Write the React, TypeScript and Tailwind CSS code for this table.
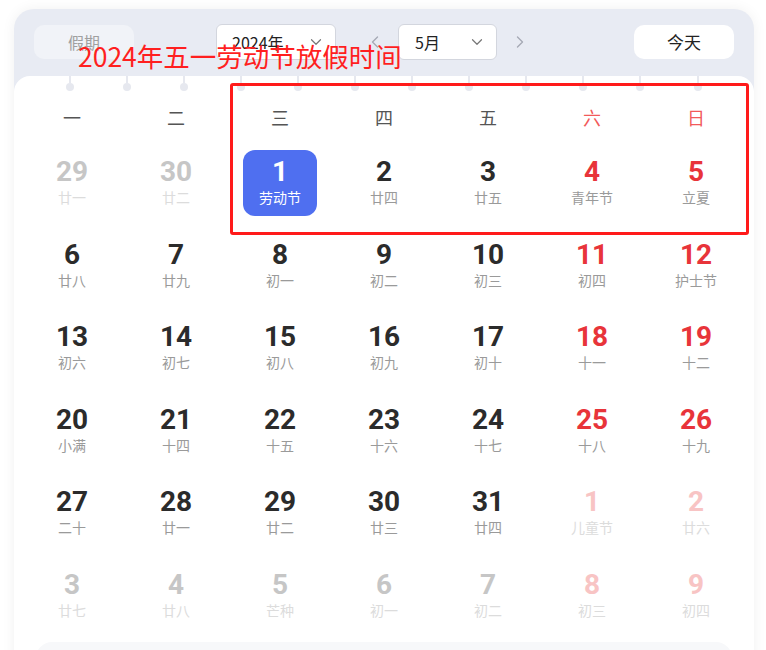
import React from 'react';
import { ChevronDown, ChevronLeft, ChevronRight } from 'lucide-react';

interface Day {
  n: number;
  lunar: string;
  out?: boolean;
  red?: boolean;
  selected?: boolean;
}

const WEEK = ['一', '二', '三', '四', '五', '六', '日'];

const ROWS: Day[][] = [
  [
    { n: 29, lunar: '廿一', out: true },
    { n: 30, lunar: '廿二', out: true },
    { n: 1, lunar: '劳动节', selected: true },
    { n: 2, lunar: '廿四' },
    { n: 3, lunar: '廿五' },
    { n: 4, lunar: '青年节', red: true },
    { n: 5, lunar: '立夏', red: true },
  ],
  [
    { n: 6, lunar: '廿八' },
    { n: 7, lunar: '廿九' },
    { n: 8, lunar: '初一' },
    { n: 9, lunar: '初二' },
    { n: 10, lunar: '初三' },
    { n: 11, lunar: '初四', red: true },
    { n: 12, lunar: '护士节', red: true },
  ],
  [
    { n: 13, lunar: '初六' },
    { n: 14, lunar: '初七' },
    { n: 15, lunar: '初八' },
    { n: 16, lunar: '初九' },
    { n: 17, lunar: '初十' },
    { n: 18, lunar: '十一', red: true },
    { n: 19, lunar: '十二', red: true },
  ],
  [
    { n: 20, lunar: '小满' },
    { n: 21, lunar: '十四' },
    { n: 22, lunar: '十五' },
    { n: 23, lunar: '十六' },
    { n: 24, lunar: '十七' },
    { n: 25, lunar: '十八', red: true },
    { n: 26, lunar: '十九', red: true },
  ],
  [
    { n: 27, lunar: '二十' },
    { n: 28, lunar: '廿一' },
    { n: 29, lunar: '廿二' },
    { n: 30, lunar: '廿三' },
    { n: 31, lunar: '廿四' },
    { n: 1, lunar: '儿童节', out: true, red: true },
    { n: 2, lunar: '廿六', out: true, red: true },
  ],
  [
    { n: 3, lunar: '廿七', out: true },
    { n: 4, lunar: '廿八', out: true },
    { n: 5, lunar: '芒种', out: true },
    { n: 6, lunar: '初一', out: true },
    { n: 7, lunar: '初二', out: true },
    { n: 8, lunar: '初三', out: true, red: true },
    { n: 9, lunar: '初四', out: true, red: true },
  ],
];

const numColor = (d: Day) => {
  if (d.selected) return 'text-white';
  if (d.out) return d.red ? 'text-[#f8c4c4]' : 'text-[#c6c6c6]';
  return d.red ? 'text-[#e8343a]' : 'text-[#2b2b2b]';
};

const lunarColor = (d: Day) => {
  if (d.selected) return 'text-white';
  if (d.out) return 'text-[#dcdcdc]';
  return 'text-[#9a9a9a]';
};

const DayCell: React.FC<{ d: Day }> = ({ d }) => (
  <div className="flex justify-center pt-[8px]">
    <div
      className={`flex h-[66px] w-[74px] flex-col items-center pt-[8px] rounded-[12px] ${
        d.selected ? 'bg-[#4f6ff0]' : ''
      }`}
    >
      <span
        className={`font-['Roboto'] text-[28px] font-bold leading-[28px] ${numColor(d)}`}
      >
        {d.n}
      </span>
      <span className={`mt-[2px] text-[14px] leading-[18px] ${lunarColor(d)}`}>{d.lunar}</span>
    </div>
  </div>
);

export default function App() {
  return (
    <div className="relative h-[650px] w-[766px] overflow-hidden bg-white font-['Noto_Sans_CJK_SC','Noto_Sans',sans-serif]">
      <div className="ml-[14px] mt-[9px] w-[740px] rounded-[20px] bg-[#e8ebf3] shadow-[0_0_14px_rgba(0,0,0,0.06)]">
        {/* header */}
        <div className="flex h-[67px] items-start px-[20px] pt-[15px]">
          <button className="mt-[1px] flex h-[34px] w-[100px] items-center justify-center rounded-[10px] bg-[#f1f3f8] text-[16px] text-[#a0a0a0]">
            假期
          </button>
          <div className="ml-[82px] flex h-[36px] w-[120px] items-center justify-between rounded-[6px] border border-[#d3d6de] bg-white pl-[15px] pr-[10px] text-[16px] text-[#222]">
            <span>2024年</span>
            <ChevronDown className="h-[18px] w-[18px] text-[#777]" strokeWidth={1.6} />
          </div>
          <div className="flex h-[36px] w-[62px] items-center pl-[29px]">
            <ChevronLeft className="h-[20px] w-[20px] text-[#a5a9b4]" strokeWidth={1.6} />
          </div>
          <div className="flex h-[36px] w-[99px] items-center justify-between rounded-[6px] border border-[#d3d6de] bg-white pl-[16px] pr-[10px] text-[16px] text-[#222]">
            <span>5月</span>
            <ChevronDown className="h-[18px] w-[18px] text-[#777]" strokeWidth={1.6} />
          </div>
          <div className="flex h-[36px] w-[46px] items-center justify-center">
            <ChevronRight className="h-[20px] w-[20px] text-[#a5a9b4]" strokeWidth={1.6} />
          </div>
          <button className="ml-auto mt-[1px] flex h-[34px] w-[100px] items-center justify-center rounded-[10px] bg-white text-[17px] text-[#222]">
            今天
          </button>
        </div>

        {/* body */}
        <div className="rounded-t-[16px] bg-white px-[6px]">
          <div className="flex h-[20px] pl-[21px]">
            {Array.from({ length: 12 }).map((_, i) => (
              <div key={i} className="flex w-[57.1px] flex-col items-center">
                <div className="h-[7px] w-[2px] bg-[#e6e8ef]" />
                <div className="h-[8px] w-[8px] rounded-full bg-[#e6e8ef]" />
              </div>
            ))}
          </div>
          <div className="grid h-[46px] grid-cols-7 items-center pb-[4px]">
            {WEEK.map((w, i) => (
              <div
                key={w}
                className={`text-center text-[18px] ${i >= 5 ? 'text-[#f25a5a]' : 'text-[#555]'}`}
              >
                {w}
              </div>
            ))}
          </div>
          {ROWS.map((row, r) => (
            <div key={r} className="grid h-[82.6px] grid-cols-7">
              {row.map((d, i) => (
                <DayCell key={i} d={d} />
              ))}
            </div>
          ))}
          <div className="mx-[16px] mt-[4px] h-[40px] rounded-[16px] bg-[#f7f8fa]" />
        </div>
      </div>

      {/* annotations */}
      <div className="absolute left-[78px] top-[37px] text-[26.5px] leading-[38px] text-[#ff1f1f]">
        2024年五一劳动节放假时间
      </div>
      <div className="absolute left-[230px] top-[83px] h-[152px] w-[519px] rounded-[3px] border-[3px] border-[#ff1a1a]" />
    </div>
  );
}
